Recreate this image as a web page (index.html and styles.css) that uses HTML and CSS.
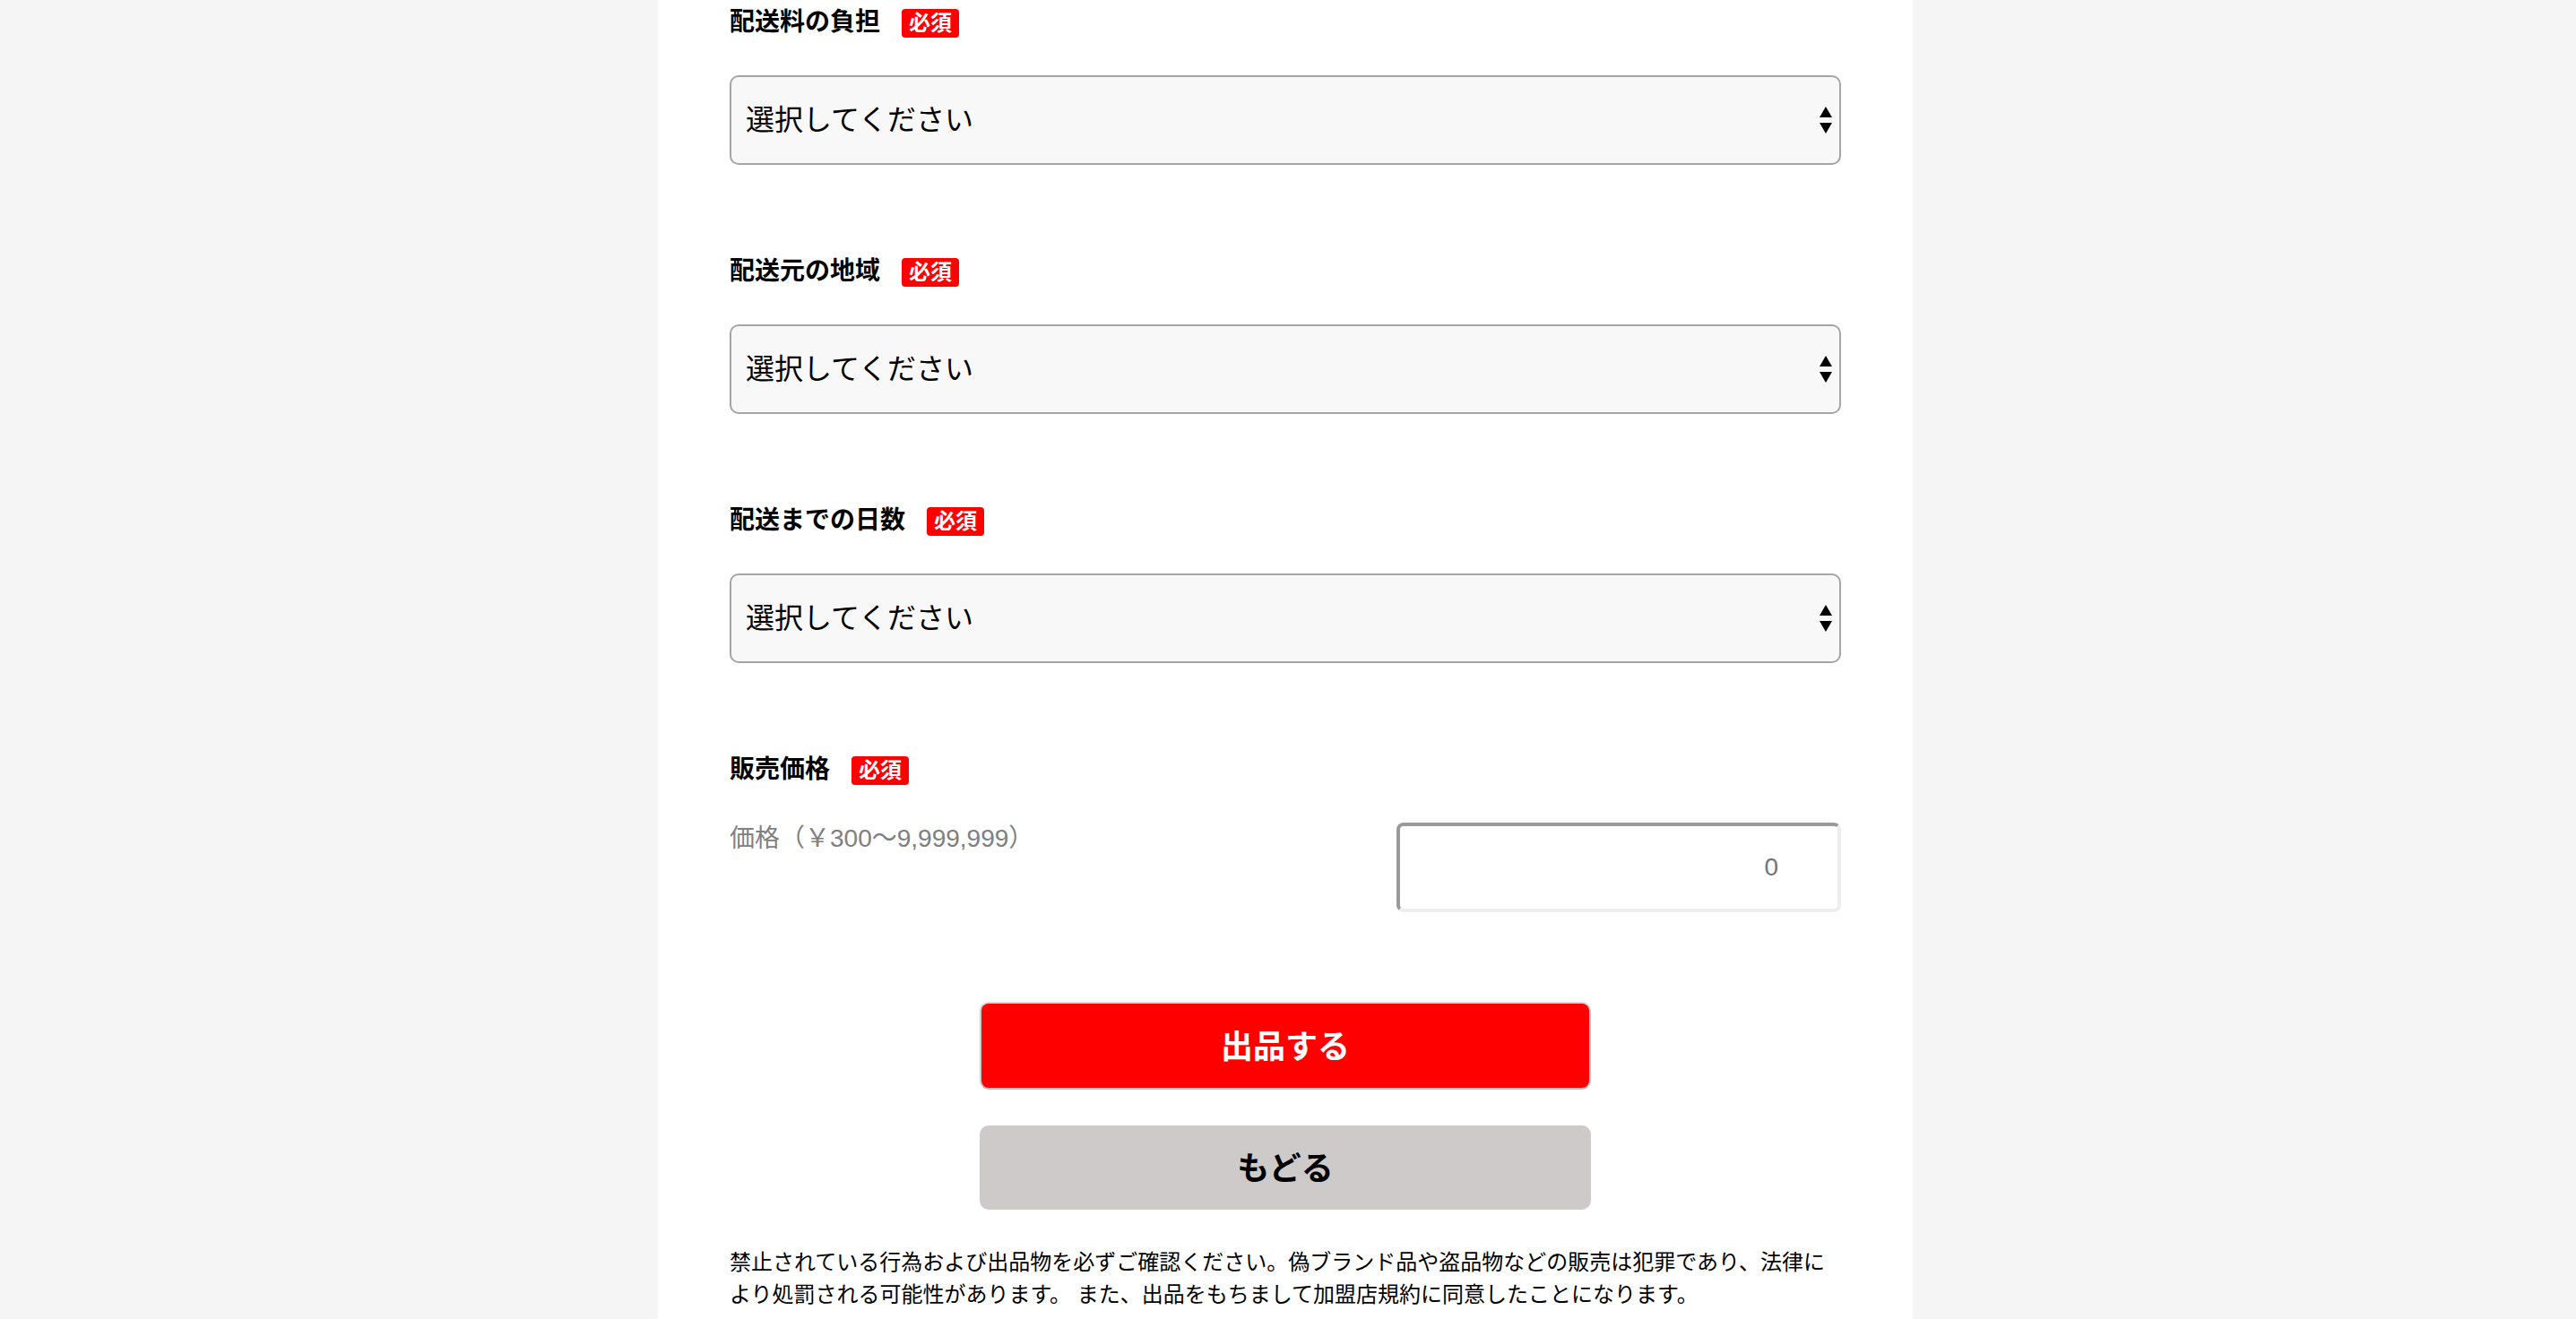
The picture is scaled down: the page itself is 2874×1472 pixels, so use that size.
FILE: index.html
```html
<!DOCTYPE html>
<html lang="ja">
<head>
<meta charset="utf-8">
<meta name="viewport" content="width=device-width, initial-scale=1">
<title>商品の出品</title>
<link rel="stylesheet" href="styles.css">
</head>
<body>
<main class="panel">
  <form class="form">
    <div class="field">
      <div class="field-head">
        <label class="field-label" for="fee">配送料の負担</label>
        <span class="badge">必須</span>
      </div>
      <div class="select-box">
        <select class="select" id="fee"><option>選択してください</option></select>
        <svg class="arrows" viewBox="0 0 16 30" aria-hidden="true"><path d="M8 0l7 12H1zM8 30l7-12H1z"/></svg>
      </div>
    </div>
    <div class="field">
      <div class="field-head">
        <label class="field-label" for="area">配送元の地域</label>
        <span class="badge">必須</span>
      </div>
      <div class="select-box">
        <select class="select" id="area"><option>選択してください</option></select>
        <svg class="arrows" viewBox="0 0 16 30" aria-hidden="true"><path d="M8 0l7 12H1zM8 30l7-12H1z"/></svg>
      </div>
    </div>
    <div class="field">
      <div class="field-head">
        <label class="field-label" for="days">配送までの日数</label>
        <span class="badge">必須</span>
      </div>
      <div class="select-box">
        <select class="select" id="days"><option>選択してください</option></select>
        <svg class="arrows" viewBox="0 0 16 30" aria-hidden="true"><path d="M8 0l7 12H1zM8 30l7-12H1z"/></svg>
      </div>
    </div>
    <div class="field">
      <div class="field-head">
        <h2 class="field-label">販売価格</h2>
        <span class="badge">必須</span>
      </div>
      <div class="price-row">
        <label class="price-label" for="price">価格（￥300〜9,999,999）</label>
        <input class="price-input" id="price" type="text" inputmode="numeric" placeholder="0">
      </div>
    </div>
    <div class="actions">
      <button class="button button-submit" type="submit">出品する</button>
      <button class="button button-back" type="button">もどる</button>
    </div>
    <p class="notice">禁止されている行為および出品物を必ずご確認ください。偽ブランド品や盗品物などの販売は犯罪であり、法律により処罰される可能性があります。 また、出品をもちまして加盟店規約に同意したことになります。</p>
  </form>
</main>
</body>
</html>
```
FILE: styles.css
```css
* {
  box-sizing: border-box;
}

body {
  margin: 0;
  padding-right: 6px;
  background: #f5f5f5;
  color: #000;
  font-family: "Liberation Sans", "Noto Sans CJK JP", sans-serif;
}

.panel {
  max-width: 1400px;
  min-height: 100vh;
  margin: 0 auto;
  padding: 0 80px;
  background: #fff;
}

.field {
  padding-bottom: 94px;
}

.field-head {
  display: flex;
  align-items: flex-end;
  gap: 24px;
  height: 42px;
  margin-bottom: 42px;
}

.field-label {
  margin: 0;
  font-size: 28px;
  font-weight: 700;
  line-height: 34px;
}

.badge {
  padding: 0 8px;
  border-radius: 4px;
  background: #f00;
  color: #fff;
  font-size: 24px;
  font-weight: 700;
  line-height: 32px;
}

.select-box {
  display: grid;
  align-items: center;
}

.select,
.arrows {
  grid-area: 1 / 1;
}

.select {
  width: 100%;
  height: 100px;
  padding: 0 16px;
  border: 2px solid #a5a5a5;
  border-radius: 10px;
  background: #f8f8f8;
  color: #000;
  font: inherit;
  font-size: 32px;
  appearance: none;
}

.arrows {
  justify-self: end;
  width: 16px;
  height: 30px;
  margin-right: 9px;
  pointer-events: none;
}

.price-row {
  display: flex;
  justify-content: space-between;
  align-items: flex-start;
}

.price-label {
  color: #808080;
  font-size: 28px;
  line-height: 36px;
}

.price-input {
  width: 40%;
  height: 100px;
  padding: 0 66px 0 16px;
  border: 4px solid;
  border-color: #9a9a9a #eee #eee #9a9a9a;
  border-radius: 8px;
  background: #fff;
  font: inherit;
  font-size: 28px;
  text-align: right;
}

.price-input::placeholder {
  color: #757575;
}

.actions {
  display: flex;
  flex-direction: column;
  align-items: center;
  gap: 40px;
  padding: 6px 0 41px;
}

.button {
  width: 55%;
  padding: 0 0 5px;
  border-radius: 10px;
  font: inherit;
  font-size: 36px;
  font-weight: 700;
}

.button-submit {
  height: 98px;
  border: 2px solid;
  border-color: #d8d8d8 #ccc #b8b8b8 #ccc;
  background: #f00;
  color: #fff;
}

.button-back {
  height: 94px;
  border: 0;
  background: #cecac9;
  color: #000;
}

.notice {
  margin: 0;
  font-size: 24px;
  line-height: 36px;
}
```
